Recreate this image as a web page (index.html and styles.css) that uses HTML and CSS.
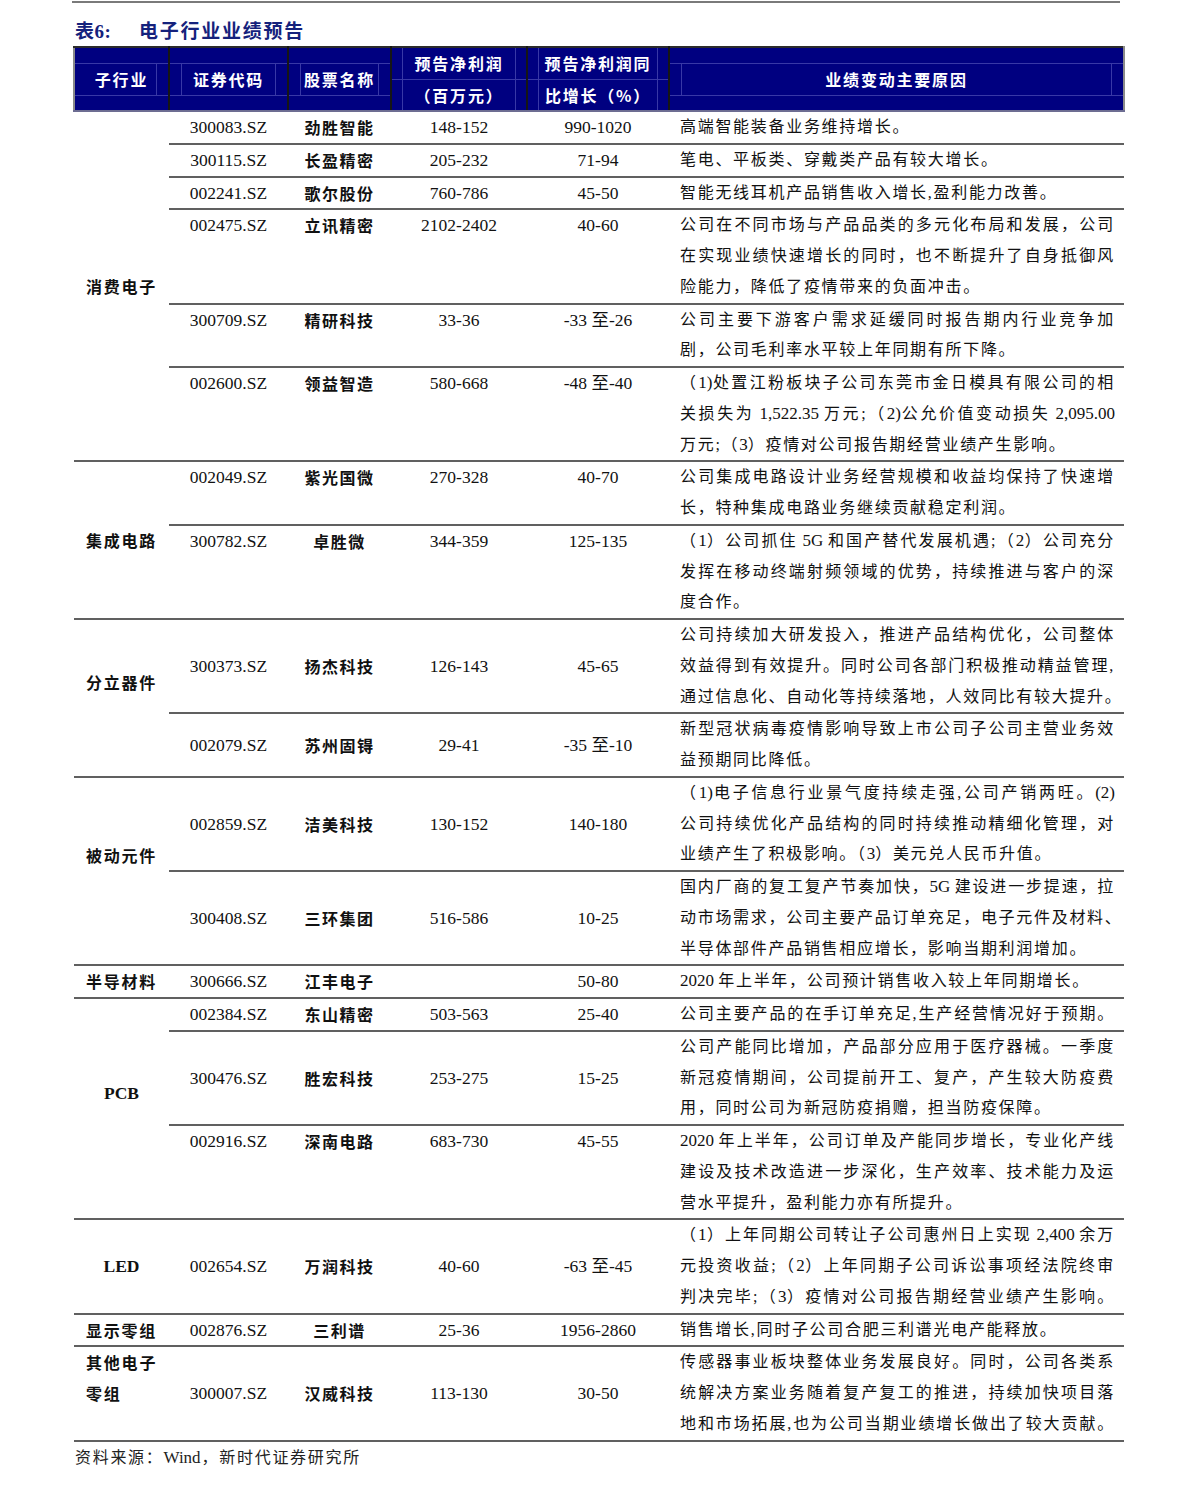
FILE: index.html
```html
<!DOCTYPE html>
<html lang="zh-CN">
<head>
<meta charset="utf-8">
<title>电子行业业绩预告</title>
<link rel="stylesheet" href="styles.css">
</head>
<body>
<div class="page">
  <div class="rule"></div>
  <div class="title"><span class="tno">表6:</span><span class="tname">电子行业业绩预告</span></div>
  <table class="t">
    <colgroup>
      <col class="c1"><col class="c2"><col class="c3"><col class="c4"><col class="c5"><col class="c6">
    </colgroup>
    <thead>
      <tr>
        <th class="first"><div class="band nl">子行业</div></th>
        <th><div class="band">证券代码</div></th>
        <th><div class="band">股票名称</div></th>
        <th><div class="band2"><div class="l1">预告净利润</div><div class="l2">（百万元）</div></div></th>
        <th><div class="band2"><div class="l1">预告净利润同</div><div class="l2">比增长（%）</div></div></th>
        <th class="last"><div class="band">业绩变动主要原因</div></th>
      </tr>
    </thead>
    <tbody>
      <tr>
        <td class="cat" rowspan="6"><div class="ln">消费电子</div></td>
        <td class="code"><div class="ln">300083.SZ</div></td>
        <td class="name"><div class="ln">劲胜智能</div></td>
        <td class="num"><div class="ln">148-152</div></td>
        <td class="num"><div class="ln">990-1020</div></td>
        <td class="rsn"><div class="ln">高端智能装备业务维持增长。</div></td>
      </tr>
      <tr>
        <td class="code"><div class="ln">300115.SZ</div></td>
        <td class="name"><div class="ln">长盈精密</div></td>
        <td class="num"><div class="ln">205-232</div></td>
        <td class="num"><div class="ln">71-94</div></td>
        <td class="rsn"><div class="ln">笔电、平板类、穿戴类产品有较大增长。</div></td>
      </tr>
      <tr>
        <td class="code"><div class="ln">002241.SZ</div></td>
        <td class="name"><div class="ln">歌尔股份</div></td>
        <td class="num"><div class="ln">760-786</div></td>
        <td class="num"><div class="ln">45-50</div></td>
        <td class="rsn"><div class="ln">智能无线耳机产品销售收入增长,盈利能力改善。</div></td>
      </tr>
      <tr>
        <td class="code"><div class="ln">002475.SZ</div></td>
        <td class="name"><div class="ln">立讯精密</div></td>
        <td class="num"><div class="ln">2102-2402</div></td>
        <td class="num"><div class="ln">40-60</div></td>
        <td class="rsn">
          <div class="ln f">公司在不同市场与产品品类的多元化布局和发展，公司</div>
          <div class="ln f">在实现业绩快速增长的同时，也不断提升了自身抵御风</div>
          <div class="ln">险能力，降低了疫情带来的负面冲击。</div>
        </td>
      </tr>
      <tr>
        <td class="code"><div class="ln">300709.SZ</div></td>
        <td class="name"><div class="ln">精研科技</div></td>
        <td class="num"><div class="ln">33-36</div></td>
        <td class="num"><div class="ln">-33 至-26</div></td>
        <td class="rsn">
          <div class="ln f">公司主要下游客户需求延缓同时报告期内行业竞争加</div>
          <div class="ln">剧，公司毛利率水平较上年同期有所下降。</div>
        </td>
      </tr>
      <tr>
        <td class="code"><div class="ln">002600.SZ</div></td>
        <td class="name"><div class="ln">领益智造</div></td>
        <td class="num"><div class="ln">580-668</div></td>
        <td class="num"><div class="ln">-48 至-40</div></td>
        <td class="rsn">
          <div class="ln f">（<span class="lat">1)</span>处置江粉板块子公司东莞市金日模具有限公司的相</div>
          <div class="ln f">关损失为<span class="lat"> 1,522.35 </span>万元;（<span class="lat">2)</span>公允价值变动损失<span class="lat"> 2,095.00</span></div>
          <div class="ln">万元;（<span class="lat">3</span>）疫情对公司报告期经营业绩产生影响。</div>
        </td>
      </tr>

      <tr>
        <td class="cat" rowspan="2"><div class="ln">集成电路</div></td>
        <td class="code"><div class="ln">002049.SZ</div></td>
        <td class="name"><div class="ln">紫光国微</div></td>
        <td class="num"><div class="ln">270-328</div></td>
        <td class="num"><div class="ln">40-70</div></td>
        <td class="rsn">
          <div class="ln f">公司集成电路设计业务经营规模和收益均保持了快速增</div>
          <div class="ln">长，特种集成电路业务继续贡献稳定利润。</div>
        </td>
      </tr>
      <tr>
        <td class="code"><div class="ln">300782.SZ</div></td>
        <td class="name"><div class="ln">卓胜微</div></td>
        <td class="num"><div class="ln">344-359</div></td>
        <td class="num"><div class="ln">125-135</div></td>
        <td class="rsn">
          <div class="ln f">（<span class="lat">1</span>）公司抓住<span class="lat"> 5G </span>和国产替代发展机遇;（<span class="lat">2</span>）公司充分</div>
          <div class="ln f">发挥在移动终端射频领域的优势，持续推进与客户的深</div>
          <div class="ln">度合作。</div>
        </td>
      </tr>

      <tr class="m">
        <td class="cat up" rowspan="2"><div class="ln">分立器件</div></td>
        <td class="code"><div class="ln">300373.SZ</div></td>
        <td class="name"><div class="ln">扬杰科技</div></td>
        <td class="num"><div class="ln">126-143</div></td>
        <td class="num"><div class="ln">45-65</div></td>
        <td class="rsn">
          <div class="ln f">公司持续加大研发投入，推进产品结构优化，公司整体</div>
          <div class="ln f">效益得到有效提升。同时公司各部门积极推动精益管理,</div>
          <div class="ln f">通过信息化、自动化等持续落地，人效同比有较大提升。</div>
        </td>
      </tr>
      <tr class="m">
        <td class="code"><div class="ln">002079.SZ</div></td>
        <td class="name"><div class="ln">苏州固锝</div></td>
        <td class="num"><div class="ln">29-41</div></td>
        <td class="num"><div class="ln">-35 至-10</div></td>
        <td class="rsn">
          <div class="ln f">新型冠状病毒疫情影响导致上市公司子公司主营业务效</div>
          <div class="ln">益预期同比降低。</div>
        </td>
      </tr>

      <tr class="m">
        <td class="cat up" rowspan="2"><div class="ln">被动元件</div></td>
        <td class="code"><div class="ln">002859.SZ</div></td>
        <td class="name"><div class="ln">洁美科技</div></td>
        <td class="num"><div class="ln">130-152</div></td>
        <td class="num"><div class="ln">140-180</div></td>
        <td class="rsn">
          <div class="ln f">（<span class="lat">1)</span>电子信息行业景气度持续走强,公司产销两旺。<span class="lat">(2)</span></div>
          <div class="ln f">公司持续优化产品结构的同时持续推动精细化管理，对</div>
          <div class="ln">业绩产生了积极影响。（<span class="lat">3</span>）美元兑人民币升值。</div>
        </td>
      </tr>
      <tr class="m">
        <td class="code"><div class="ln">300408.SZ</div></td>
        <td class="name"><div class="ln">三环集团</div></td>
        <td class="num"><div class="ln">516-586</div></td>
        <td class="num"><div class="ln">10-25</div></td>
        <td class="rsn">
          <div class="ln f">国内厂商的复工复产节奏加快，<span class="lat">5G </span>建设进一步提速，拉</div>
          <div class="ln f">动市场需求，公司主要产品订单充足，电子元件及材料、</div>
          <div class="ln">半导体部件产品销售相应增长，影响当期利润增加。</div>
        </td>
      </tr>

      <tr>
        <td class="cat"><div class="ln">半导材料</div></td>
        <td class="code"><div class="ln">300666.SZ</div></td>
        <td class="name"><div class="ln">江丰电子</div></td>
        <td class="num"><div class="ln"></div></td>
        <td class="num"><div class="ln">50-80</div></td>
        <td class="rsn"><div class="ln"><span class="lat">2020 </span>年上半年，公司预计销售收入较上年同期增长。</div></td>
      </tr>

      <tr>
        <td class="cat lc up" rowspan="3"><div class="ln">PCB</div></td>
        <td class="code"><div class="ln">002384.SZ</div></td>
        <td class="name"><div class="ln">东山精密</div></td>
        <td class="num"><div class="ln">503-563</div></td>
        <td class="num"><div class="ln">25-40</div></td>
        <td class="rsn"><div class="ln f">公司主要产品的在手订单充足,生产经营情况好于预期。</div></td>
      </tr>
      <tr class="m">
        <td class="code"><div class="ln">300476.SZ</div></td>
        <td class="name"><div class="ln">胜宏科技</div></td>
        <td class="num"><div class="ln">253-275</div></td>
        <td class="num"><div class="ln">15-25</div></td>
        <td class="rsn">
          <div class="ln f">公司产能同比增加，产品部分应用于医疗器械。一季度</div>
          <div class="ln f">新冠疫情期间，公司提前开工、复产，产生较大防疫费</div>
          <div class="ln">用，同时公司为新冠防疫捐赠，担当防疫保障。</div>
        </td>
      </tr>
      <tr>
        <td class="code"><div class="ln">002916.SZ</div></td>
        <td class="name"><div class="ln">深南电路</div></td>
        <td class="num"><div class="ln">683-730</div></td>
        <td class="num"><div class="ln">45-55</div></td>
        <td class="rsn">
          <div class="ln f"><span class="lat">2020 </span>年上半年，公司订单及产能同步增长，专业化产线</div>
          <div class="ln f">建设及技术改造进一步深化，生产效率、技术能力及运</div>
          <div class="ln">营水平提升，盈利能力亦有所提升。</div>
        </td>
      </tr>

      <tr class="m">
        <td class="cat lc"><div class="ln">LED</div></td>
        <td class="code"><div class="ln">002654.SZ</div></td>
        <td class="name"><div class="ln">万润科技</div></td>
        <td class="num"><div class="ln">40-60</div></td>
        <td class="num"><div class="ln">-63 至-45</div></td>
        <td class="rsn">
          <div class="ln f">（<span class="lat">1</span>）上年同期公司转让子公司惠州日上实现<span class="lat"> 2,400 </span>余万</div>
          <div class="ln f">元投资收益;（<span class="lat">2</span>）上年同期子公司诉讼事项经法院终审</div>
          <div class="ln f">判决完毕;（<span class="lat">3</span>）疫情对公司报告期经营业绩产生影响。</div>
        </td>
      </tr>

      <tr>
        <td class="cat"><div class="ln">显示零组</div></td>
        <td class="code"><div class="ln">002876.SZ</div></td>
        <td class="name"><div class="ln">三利谱</div></td>
        <td class="num"><div class="ln">25-36</div></td>
        <td class="num"><div class="ln">1956-2860</div></td>
        <td class="rsn"><div class="ln">销售增长,同时子公司合肥三利谱光电产能释放。</div></td>
      </tr>

      <tr class="m">
        <td class="cat left"><div class="ln">其他电子</div><div class="ln">零组</div><div class="ln"></div></td>
        <td class="code"><div class="ln">300007.SZ</div></td>
        <td class="name"><div class="ln">汉威科技</div></td>
        <td class="num"><div class="ln">113-130</div></td>
        <td class="num"><div class="ln">30-50</div></td>
        <td class="rsn">
          <div class="ln f">传感器事业板块整体业务发展良好。同时，公司各类系</div>
          <div class="ln f">统解决方案业务随着复产复工的推进，持续加快项目落</div>
          <div class="ln f">地和市场拓展,也为公司当期业绩增长做出了较大贡献。</div>
        </td>
      </tr>
    </tbody>
  </table>
  <div class="src">资料来源：<span class="w">Wind</span>，新时代证券研究所</div>
</div>
</body>
</html>
```

FILE: styles.css
```css
body {
  margin: 0;
  background: #ffffff;
  color: #111111;
  font-family: "Liberation Serif", "Noto Sans CJK SC", serif;
}

.page {
  width: 1050px;
  margin-left: 73px;
  padding-top: 1px;
}

.rule {
  height: 2px;
  width: 1048px;
  margin-left: -1px;
  background: #7a7a7a;
}

.title {
  margin: 17px 0 2px 2px;
  height: 24px;
  line-height: 24px;
  font-size: 19px;
  font-weight: bold;
  color: #15227c;
  white-space: nowrap;
}

.tno {
  display: inline-block;
  width: 64px;
  letter-spacing: 0.5px;
}

.tname {
  letter-spacing: 1.75px;
}

.t {
  width: 1050px;
  border-collapse: collapse;
  table-layout: fixed;
}

.c1 { width: 95px; }
.c2 { width: 119px; }
.c3 { width: 103px; }
.c4 { width: 136px; }
.c5 { width: 142px; }
.c6 { width: 455px; }

/* header */
.t th {
  background: #000080;
  color: #ffffff;
  font-family: "Noto Sans CJK SC", sans-serif;
  font-weight: bold;
  font-size: 16px;
  letter-spacing: 1.8px;
  padding: 0;
  height: 62px;
  vertical-align: middle;
  text-align: center;
  border-top: 2px solid #2b2b2b;
  border-bottom: 2px solid #6d6d92;
  border-left: 2px solid #161616;
  border-right: 2px solid #161616;
  white-space: nowrap;
}

.t th.first { border-left: 2px solid #8a8a8a; }
.t th.last { border-right: 2px solid #8a8a8a; }

.band {
  height: 31px;
  line-height: 31px;
  border-top: 1px solid #3838a6;
  border-bottom: 1px solid #3838a6;
  background:
    linear-gradient(#3838a6, #3838a6) no-repeat 11px 0 / 1px 100%,
    linear-gradient(#3838a6, #3838a6) no-repeat calc(100% - 11px) 0 / 1px 100%;
}

.band.nl {
  background:
    linear-gradient(#3838a6, #3838a6) no-repeat calc(100% - 11px) 0 / 1px 100%;
}

.band2 {
  background:
    linear-gradient(#3838a6, #3838a6) no-repeat 10px 0 / 1px 100%,
    linear-gradient(#3838a6, #3838a6) no-repeat calc(100% - 10px) 0 / 1px 100%;
}

.band2 .l1 {
  height: 31px;
  line-height: 31px;
  border-bottom: 1px solid #3838a6;
}

.band2 .l2 {
  height: 30px;
  line-height: 30px;
}

/* body */
.t td {
  padding: 0;
  border-bottom: 2px solid #606060;
  vertical-align: top;
  text-align: center;
  font-size: 16px;
}

.t tr.m td { vertical-align: middle; }

.ln {
  height: 30.76px;
  line-height: 30.76px;
  white-space: nowrap;
}

.t td.code,
.t td.num {
  font-size: 17.5px;
}

.t td.name {
  font-weight: bold;
  letter-spacing: 1.5px;
  font-family: "Noto Sans CJK SC", sans-serif;
}

.t td.cat {
  font-weight: bold;
  letter-spacing: 1.8px;
  vertical-align: middle;
  font-family: "Noto Sans CJK SC", sans-serif;
}

.t td.cat.lc {
  font-family: "Liberation Serif", serif;
  font-size: 17.5px;
  letter-spacing: 0;
}

.t td.cat.up { padding-bottom: 31px; }

.t td.cat.left {
  text-align: left;
  padding-left: 12px;
  vertical-align: top;
}

.t td.rsn {
  text-align: left;
  padding: 0 9px 0 11px;
  letter-spacing: 1.7px;
}

.rsn .f {
  text-align: justify;
  text-align-last: justify;
}

.lat {
  letter-spacing: 0;
  font-size: 17px;
}

.src {
  margin: 4px 0 0 2px;
  height: 24px;
  line-height: 24px;
  font-size: 16px;
  color: #222222;
  letter-spacing: 1.7px;
}

.src .w {
  letter-spacing: 0;
  font-size: 17px;
  margin-right: 1px;
}
```
